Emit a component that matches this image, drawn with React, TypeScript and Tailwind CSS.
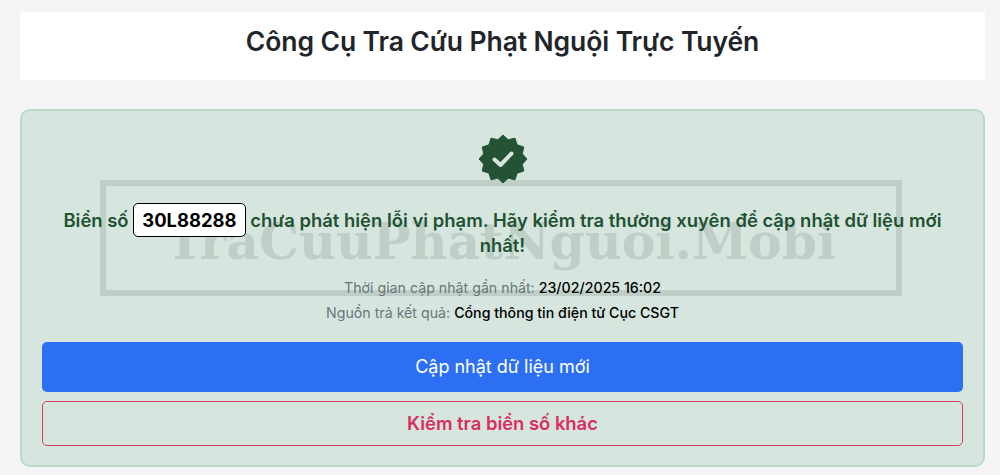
const badgePoints = Array.from({ length: 24 }, (_, i) => {
  const r = i % 2 === 0 ? 24 : 20;
  const a = (Math.PI * i) / 12 - Math.PI / 2;
  return `${(25 + r * Math.cos(a)).toFixed(2)},${(25 + r * Math.sin(a)).toFixed(2)}`;
}).join(" ");

function BadgeIcon() {
  return (
    <svg viewBox="0 0 50 50" className="h-[50px] w-[50px]">
      <polygon points={badgePoints} fill="#235334" stroke="#235334" strokeWidth="1" strokeLinejoin="round" />
      <path d="M16.5 25.5l6 5.5 11-11.5" fill="none" stroke="#d6e6de" strokeWidth="4" strokeLinecap="round" strokeLinejoin="round" />
    </svg>
  );
}

export default function App() {
  return (
    <div className="h-[475px] overflow-hidden bg-[#f5f5f7] pl-5 pr-[15px] pt-3 font-['Inter',sans-serif]">
      <div className="flex h-[68px] items-center justify-center bg-white pb-[10px]">
        <h1 className="text-[26.5px] font-semibold leading-none tracking-[-0.1px] text-[#212529]">
          Công Cụ Tra Cứu Phạt Nguội Trực Tuyến
        </h1>
      </div>
      <div className="relative mt-[29px] h-[358px] rounded-[10px] border-2 border-[#bcd8c9] bg-[#d6e6de] px-5 pt-[23px]">
        <div className="absolute left-[78px] top-[69px] flex h-[116px] w-[802px] items-center justify-center border-[6px] border-[#bfcfc7] pt-2">
          <span className="font-['DejaVu_Serif',serif] text-[50.5px] font-bold leading-none text-[#bfcfc7]">
            TraCuuPhatNguoi.Mobi
          </span>
        </div>
        <div className="relative flex flex-col items-center">
          <BadgeIcon />
          <p className="mt-[23px] text-center text-[18.45px] font-semibold leading-[25px] text-[#1f5233]">
            Biển số{" "}
            <span className="-my-[4px] inline-block rounded-[5px] border border-black bg-white px-[8px] text-[18.45px] font-bold leading-[32px] text-black">
              30L88288
            </span>{" "}
            chưa phát hiện lỗi vi phạm. Hãy kiểm tra thường xuyên để cập nhật dữ liệu mới nhất!
          </p>
          <p className="mt-[18px] text-[14.2px] leading-[24px] text-[#6c757d]">
            Thời gian cập nhật gần nhất: <span className="font-medium text-black">23/02/2025 16:02</span>
          </p>
          <p className="mt-px text-[14.2px] leading-[24px] text-[#6c757d]">
            Nguồn trả kết quả: <span className="font-medium text-black">Cổng thông tin điện tử Cục CSGT</span>
          </p>
          <button
            type="button"
            className="mt-[17px] h-[50px] w-full rounded-[5px] bg-[#2d6ff3] text-[18px] leading-none text-white"
          >
            Cập nhật dữ liệu mới
          </button>
          <button
            type="button"
            className="mt-[9px] h-[45px] w-full rounded-[5px] border border-[#d63a66] text-[18.4px] font-semibold leading-none text-[#d92d5f]"
          >
            Kiểm tra biển số khác
          </button>
        </div>
      </div>
    </div>
  );
}
